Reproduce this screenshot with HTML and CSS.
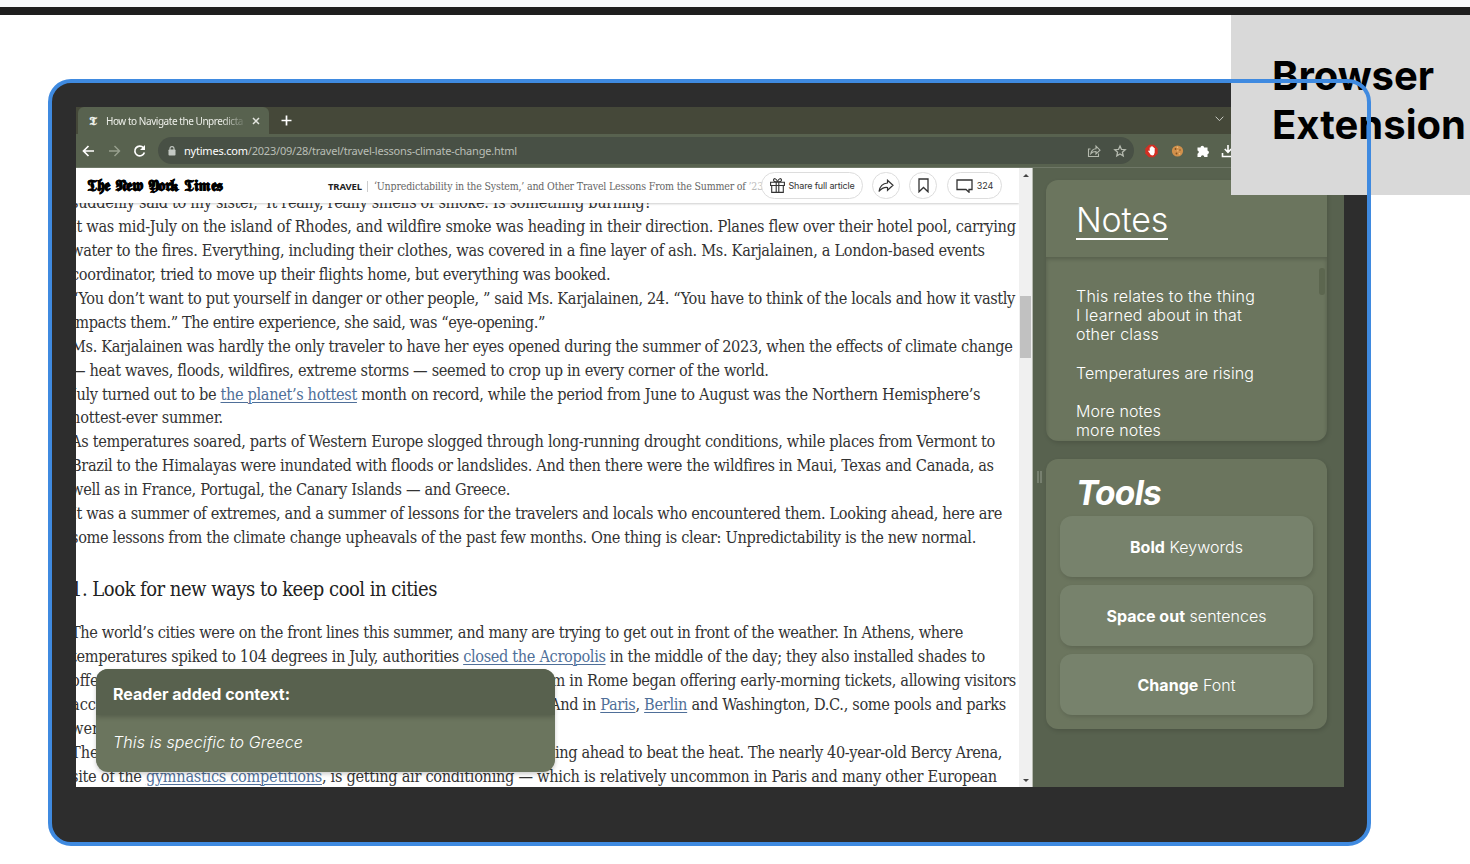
FILE: index.html
```html
<!DOCTYPE html>
<html lang="en">
<head>
<meta charset="utf-8">
<title>Browser Extension</title>
<link rel="stylesheet" href="styles.css">
</head>
<body>
<div class="topbar"></div>
<main class="canvas">
  <section class="device">
    <div class="screen">
      <div class="tabs">
        <div class="tab">
          <span class="favicon">𝕿</span>
          <span class="tab-title" data-w="137">How to Navigate the Unpredicta</span>
          <svg class="close" width="8" height="8" viewBox="0 0 8 8"><path d="M1 1l6 6M7 1l-6 6" stroke="#e4e6e0" stroke-width="1.5"/></svg>
        </div>
        <svg class="plus" width="11" height="11" viewBox="0 0 11 11"><path d="M5.500 .5v10M.5 5.500h10" stroke="#fff" stroke-width="1.700"/></svg>
        <svg class="chev" width="9" height="6" viewBox="0 0 9 6"><path d="M.7 .7l3.800 4 3.800-4" fill="none" stroke="#c9cbc4" stroke-width="1"/></svg>
      </div>
      <div class="toolbar">
        <svg class="nav" width="66" height="14" viewBox="0 0 66 14" fill="none" stroke-width="1.700">
          <path d="M12 7H1.800M6.500 2L1.500 7l5 5" stroke="#fff"/>
          <path d="M27 7h10.200M32.500 2l5 5-5 5" stroke="#98a08f" stroke-width="1.400"/>
          <path d="M61.500 3.800A4.900 4.900 0 1 0 62.400 8.500" stroke="#fff"/><path d="M63 1v5h-5z" fill="#fff"/>
        </svg>
        <div class="address">
          <svg width="8" height="10" viewBox="0 0 8 10"><rect x=".5" y="3.500" width="7" height="6" rx=".8" fill="#c4c9c4"/><path d="M2 4V2.600a2 2 0 0 1 4 0V4" fill="none" stroke="#c4c9c4" stroke-width="1.100"/></svg>
          <span class="url" data-w="333"><b>nytimes.com</b>/2023/09/28/travel/travel-lessons-climate-change.html</span>
          <svg class="addr-icons" width="40" height="14" viewBox="0 0 40 14" fill="none" stroke="#b4b9ae" stroke-width="1.100">
            <path d="M3.500 5H1.500v7.500h10V9.500M3.800 9.500C4.500 6 6.500 4.800 9 4.700V2.200l4 4-4 3.800V7.500C6.800 7.400 5.200 8 3.800 9.500z"/>
            <path stroke-width="1.300" d="M33 2l1.500 3.400 3.700.3-2.800 2.500.8 3.700-3.200-2-3.200 2 .8-3.700-2.800-2.500 3.700-.3z"/>
          </svg>
        </div>
        <svg class="ext" width="96" height="14" viewBox="0 0 96 14">
          <path d="M4 .7h5l3.700 3.700v5.200L9 13.300H4L.3 9.600V4.400z" fill="#d32f23"/>
          <path d="M3 7l1-.5.7.7V3.500h1V2.600h1v-.4h1v.8h1v1h1v4.600q-.3 2.800-2.500 2.800-2 0-2.700-2.300z" fill="#fff"/>
          <circle cx="32.500" cy="7" r="5.600" fill="#d1904b"/><circle cx="30.500" cy="5" r=".9" fill="#805020"/><circle cx="35" cy="6" r=".8" fill="#8a5a28"/><circle cx="31.500" cy="9.500" r=".9" fill="#805020"/><circle cx="34.500" cy="9.700" r=".8" fill="#f1c07c"/><circle cx="32.500" cy="3.200" r=".8" fill="#f1c07c"/><circle cx="32.700" cy="6.800" r=".8" fill="#e9b26c"/>
          <path d="M52.500 3.500h3a1.800 1.800 0 0 1 3.600 0h3.400v3a1.900 1.900 0 0 1 0 3.700v2.800h-3.200a1.700 1.700 0 0 0-3.400 0h-3.400V9.700a1.700 1.700 0 0 0 0-3.300z" fill="#fff"/>
          <path d="M83 1v7M79.800 5l3.200 3.300L86.200 5M77.500 9v3.500h11V9" stroke="#fff" stroke-width="1.600" fill="none"/>
        </svg>
      </div>
      <div class="page">
        <article class="article">
          <header class="masthead">
            <span class="logo" data-w="136" aria-label="The New York Times">𝕿𝖍𝖊 𝕹𝖊𝖜 𝖄𝖔𝖗𝖐 𝕿𝖎𝖒𝖊𝖘</span>
            <span class="section" data-w="34">TRAVEL</span>
            <span class="headline" data-w="389">‘Unpredictability in the System,’ and Other Travel Lessons From the Summer of <i>’23</i></span>
            <div class="actions">
              <span class="pill share"><svg width="15" height="15" viewBox="0 0 15 15" fill="none" stroke="#333" stroke-width="1.100"><path d="M.6 4.200h13.800v3.300H.6zM1.700 7.500h11.600v6.900H1.700zM6.200 4.200v10.200M8.800 4.200v10.200M7.500 4C5.500 4 3.500 3.500 3.500 2 3.500.2 6.500-.3 7.500 4 8.500-.3 11.500.2 11.500 2c0 1.500-2 2-4 2z"/></svg><span data-w="66">Share full article</span></span>
              <span class="pill round"><svg width="16" height="14" viewBox="0 0 16 14" fill="none" stroke="#333" stroke-width="1.200"><path d="M9.500 4V1.200L15 6.300l-5.500 5V8.500C5.800 8.200 3.300 9.500 1 12.500 1.800 7.500 4.500 4.300 9.500 4z"/></svg></span>
              <span class="pill round mark"><svg width="11" height="15" viewBox="0 0 11 15" fill="none" stroke="#333" stroke-width="1.300"><path d="M1 1h9v12.800L5.500 9.500 1 13.800z"/></svg></span>
              <span class="pill count"><svg width="17" height="14" viewBox="0 0 17 14" fill="none" stroke="#333" stroke-width="1.300"><path d="M1 1h15v9.500h-3v2.700l-3-2.700H1z"/></svg><span data-w="16.500">324</span></span>
            </div>
          </header>
          <div class="story">
            <p data-w="585">suddenly said to my sister, ‘It really, really smells of smoke. Is something burning?’</p>
            <p data-w="944">It was mid-July on the island of Rhodes, and wildfire smoke was heading in their direction. Planes flew over their hotel pool, carrying</p>
            <p data-w="913">water to the fires. Everything, including their clothes, was covered in a fine layer of ash. Ms. Karjalainen, a London-based events</p>
            <p data-w="539">coordinator, tried to move up their flights home, but everything was booked.</p>
            <p data-w="944">“You don’t want to put yourself in danger or other people, ” said Ms. Karjalainen, 24. “You have to think of the locals and how it vastly</p>
            <p data-w="474">impacts them.” The entire experience, she said, was “eye-opening.”</p>
            <p data-w="941">Ms. Karjalainen was hardly the only traveler to have her eyes opened during the summer of 2023, when the effects of climate change</p>
            <p data-w="697">— heat waves, floods, wildfires, extreme storms — seemed to crop up in every corner of the world.</p>
            <p data-w="909">July turned out to be <a>the planet’s hottest</a> month on record, while the period from June to August was the Northern Hemisphere’s</p>
            <p data-w="152">hottest-ever summer.</p>
            <p data-w="924">As temperatures soared, parts of Western Europe slogged through long-running drought conditions, while places from Vermont to</p>
            <p data-w="922">Brazil to the Himalayas were inundated with floods or landslides. And then there were the wildfires in Maui, Texas and Canada, as</p>
            <p data-w="439">well as in France, Portugal, the Canary Islands — and Greece.</p>
            <p data-w="931">It was a summer of extremes, and a summer of lessons for the travelers and locals who encountered them. Looking ahead, here are</p>
            <p data-w="905">some lessons from the climate change upheavals of the past few months. One thing is clear: Unpredictability is the new normal.</p>
            <h2 data-w="366">1. Look for new ways to keep cool in cities</h2>
            <p data-w="892">The world’s cities were on the front lines this summer, and many are trying to get out in front of the weather. In Athens, where</p>
            <p data-w="914">temperatures spiked to 104 degrees in July, authorities <a>closed the Acropolis</a> in the middle of the day; they also installed shades to</p>
            <div class="split w1"><p>offe</p><p data-w="464">m in Rome began offering early-morning tickets, allowing visitors</p></div>
            <div class="split w2"><p>acc</p><p data-w="456">And in <a>Paris</a>, <a>Berlin</a> and Washington, D.C., some pools and parks</p></div>
            <p>wer</p>
            <div class="split w3"><p>The</p><p data-w="447">ing ahead to beat the heat. The nearly 40-year-old Bercy Arena,</p></div>
            <p data-w="926">site of the <a>gymnastics competitions</a>, is getting air conditioning — which is relatively uncommon in Paris and many other European</p>
          </div>
          <aside class="context">
            <h3 data-w="177">Reader added context:</h3>
            <p data-w="190">This is specific to Greece</p>
          </aside>
        </article>
        <div class="scrollbar"><i class="up"></i><i class="thumb"></i><i class="down"></i></div>
        <div class="panel">
          <span class="grip"></span>
          <section class="card notes">
            <h1><span data-w="92">Notes</span></h1>
            <div class="notes-body">
              <p data-w="179">This relates to the thing</p><p data-w="166">I learned about in that</p><p data-w="83">other class</p><p>&nbsp;</p>
              <p data-w="178">Temperatures are rising</p><p>&nbsp;</p><p data-w="85">More notes</p><p data-w="85">more notes</p>
              <i class="notes-thumb"></i>
            </div>
          </section>
          <section class="card tools">
            <h1 data-w="85">Tools</h1>
            <div class="tool"><span data-w="113"><b>Bold</b> Keywords</span></div>
            <div class="tool"><span data-w="160"><b>Space out</b> sentences</span></div>
            <div class="tool"><span data-w="98"><b>Change</b> Font</span></div>
          </section>
        </div>
      </div>
    </div>
  </section>
  <div class="label"><span data-w="162">Browser</span><span data-w="194">Extension</span></div>
  <div class="selection"></div>
</main>
<script src="fit.js"></script>
</body>
</html>
```
FILE: styles.css
```css
* { box-sizing: border-box; margin: 0; padding: 0; }
body { width: 1470px; height: 864px; overflow: hidden; background: #fff; font-family: Inter, "Liberation Sans", sans-serif; display: flex; flex-direction: column; }
[data-w] { white-space: nowrap; width: max-content; }
.topbar { height: 15px; flex: none; border-top: 7px solid #f8f9fb; background: #1e1e1e; }
.canvas { position: relative; flex: 1; }

/* Artboard items */
.device { position: absolute; left: 50px; top: 67px; width: 1319px; height: 762px; border-radius: 20px; background: #2d2d2d; padding: 25px 25px 40px 26px; }
.label { position: absolute; left: 1231px; top: 0; width: 239px; height: 180px; padding: 36px 0 0 41px; background: #d9d9d9; display: flex; flex-direction: column; font-weight: 700; font-size: 40px; line-height: 49px; color: #000; }
.selection { position: absolute; left: 48px; top: 64px; width: 1323px; height: 767px; border: 4px solid #3f8ae0; border-radius: 23px; }

.screen { width: 1268px; height: 680px; display: flex; flex-direction: column; background: #58624f; overflow: hidden; }
.tabs { height: 27px; background: #454839; display: flex; align-items: center; padding-left: 2px; }
.tab { width: 191px; height: 27px; border-radius: 6px 6px 0 0; background: #58624f; display: flex; align-items: center; padding-left: 11px; font: 10px "Noto Sans", sans-serif; color: #edefe9; }
.favicon { width: 17px; font: 700 13px/13px "DejaVu Sans", serif; }
.tab-title { -webkit-mask-image: linear-gradient(90deg, #000 84%, transparent 103%); }
.close { margin-left: 9px; }
.plus { margin-left: 12px; }
.chev { margin-left: 923px; margin-bottom: 3px; }
.toolbar { height: 34px; display: flex; align-items: center; padding-left: 6px; border-bottom: 1px solid #6f7867; }
.nav { margin-right: 10px; }
.address { width: 976px; height: 27px; border-radius: 14px; background: #485045; display: flex; align-items: center; padding: 0 7px 0 10px; font: 11px "Noto Sans", sans-serif; color: #b9beb5; }
.url { margin-left: 8px; }
.url b { font-weight: 400; color: #fff; }
.addr-icons { margin-left: auto; }
.ext { margin-left: 11px; flex: none; }

.page { flex: 1; display: flex; min-height: 0; }
.article { position: relative; width: 943px; background: #fff; overflow: hidden; }
.masthead { position: relative; z-index: 1; height: 35px; background: #fff; box-shadow: 0 1px 2px #0003; display: flex; align-items: center; padding-left: 11px; }
.logo { font: 700 16px/20px "DejaVu Sans", serif; color: #000; -webkit-text-stroke: .3px #000; }
.section { margin: 2px 0 0 105px; font: 700 9.5px "Noto Sans", sans-serif; color: #222; }
.headline { margin: 2px 0 0 5px; padding-left: 6px; border-left: 1px solid #ccc; font: 10.5px "DejaVu Serif Condensed", "DejaVu Serif", serif; color: #666; line-height: 11px; }
.headline i { font-style: normal; color: #bbb; }
.actions { display: flex; gap: 9px; margin-left: -2px; }
.pill { flex: none; height: 27px; border: 1px solid #ddd; border-radius: 14px; background: #fff; display: flex; align-items: center; justify-content: center; gap: 4px; font: 9px Inter, sans-serif; color: #333; }
.share { width: 102px; }
.round { width: 28px; }
.mark { margin-right: 1px; }
.count { width: 55px; }

.story { margin: -12px 0 0 -5px; width: 960px; color: #333; font-family: "DejaVu Serif Condensed", "DejaVu Serif", serif; font-stretch: condensed; font-size: 16.2px; line-height: 23.95px; }
.story p { height: 23.95px; white-space: nowrap; }
.story a { color: #4f6f99; text-decoration: underline; text-underline-offset: 2px; text-decoration-thickness: 1px; }
.story h2 { font-weight: 400; font-size: 20px; line-height: 30px; height: 30px; margin: 24px 0 17px; color: #222; }
.split { display: flex; justify-content: space-between; }
.w1 { width: 945px; }
.w2 { width: 935px; }
.w3 { width: 931px; }
.context { position: absolute; left: 20px; top: 501px; width: 459px; height: 103px; border-radius: 12px; background: #6b755e; color: #fff; overflow: hidden; box-shadow: 0 2px 4px #0003; }
.context { z-index: 2; }
.context h3 { width: 459px; height: 46px; padding-left: 17px; background: #58614e; box-shadow: 0 2px 5px #0003; font-size: 16px; font-weight: 700; line-height: 51px; }
.context p { margin: 17px 0 0 17px; font-size: 16px; font-style: italic; font-weight: 300; line-height: 20px; }

.scrollbar { width: 14px; background: #f0f0f0; border-right: 1px solid #b6bab0; display: flex; flex-direction: column; align-items: center; }
.up, .down { border: 3px solid transparent; }
.up { border-bottom-color: #444; border-top: 0; margin-top: 6px; }
.down { border-top-color: #444; border-bottom: 0; margin-top: auto; margin-bottom: 5px; }
.thumb { width: 11px; height: 62px; margin-top: 119px; background: #c1c1c1; }

.panel { position: relative; width: 311px; padding: 12px 17px 0 13px; background: #58624f; }
.grip { position: absolute; left: 4px; top: 303px; width: 5px; height: 12px; border: solid #77806f; border-width: 0 2px; }
.card { width: 281px; border-radius: 12px; background: #6b755e; box-shadow: 1px 2px 4px #0002; color: #fff; overflow: hidden; }
.notes { height: 261px; }
.notes h1 { height: 77px; padding: 20px 0 0 30px; font-weight: 300; font-size: 34px; line-height: 40px; }
.notes h1 span { display: block; height: 40px; border-bottom: 2px solid #fff; }
.notes-body { position: relative; height: 184px; padding: 30px 0 0 30px; box-shadow: inset 0 2px 4px #0003; font-size: 16px; font-weight: 350; line-height: 19.2px; }
.notes-thumb { position: absolute; right: 2px; top: 11px; width: 6px; height: 27px; border-radius: 3px; background: #5c664f; }
.tools { height: 270px; margin-top: 18px; padding: 15px 14px 0; }
.tools h1 { margin: 0 0 4px 16px; font-size: 33.5px; font-weight: 700; font-style: italic; line-height: 38px; }
.tool { height: 61px; margin-bottom: 8px; border-radius: 12px; background: #77826c; box-shadow: 1px 2px 4px #0002; display: flex; align-items: center; justify-content: center; font-size: 16px; font-weight: 300; }
.tool b { font-weight: 700; }
```
FILE: fit.js
```js
// Track each text run so that it fills its set width.
document.querySelectorAll('[data-w]').forEach(function (el) {
  var range = document.createRange();
  range.selectNodeContents(el);
  var width = range.getBoundingClientRect().width;
  var count = Array.from(el.textContent).length;
  el.style.letterSpacing = ((el.dataset.w - width) / count).toFixed(3) + 'px';
});
```
